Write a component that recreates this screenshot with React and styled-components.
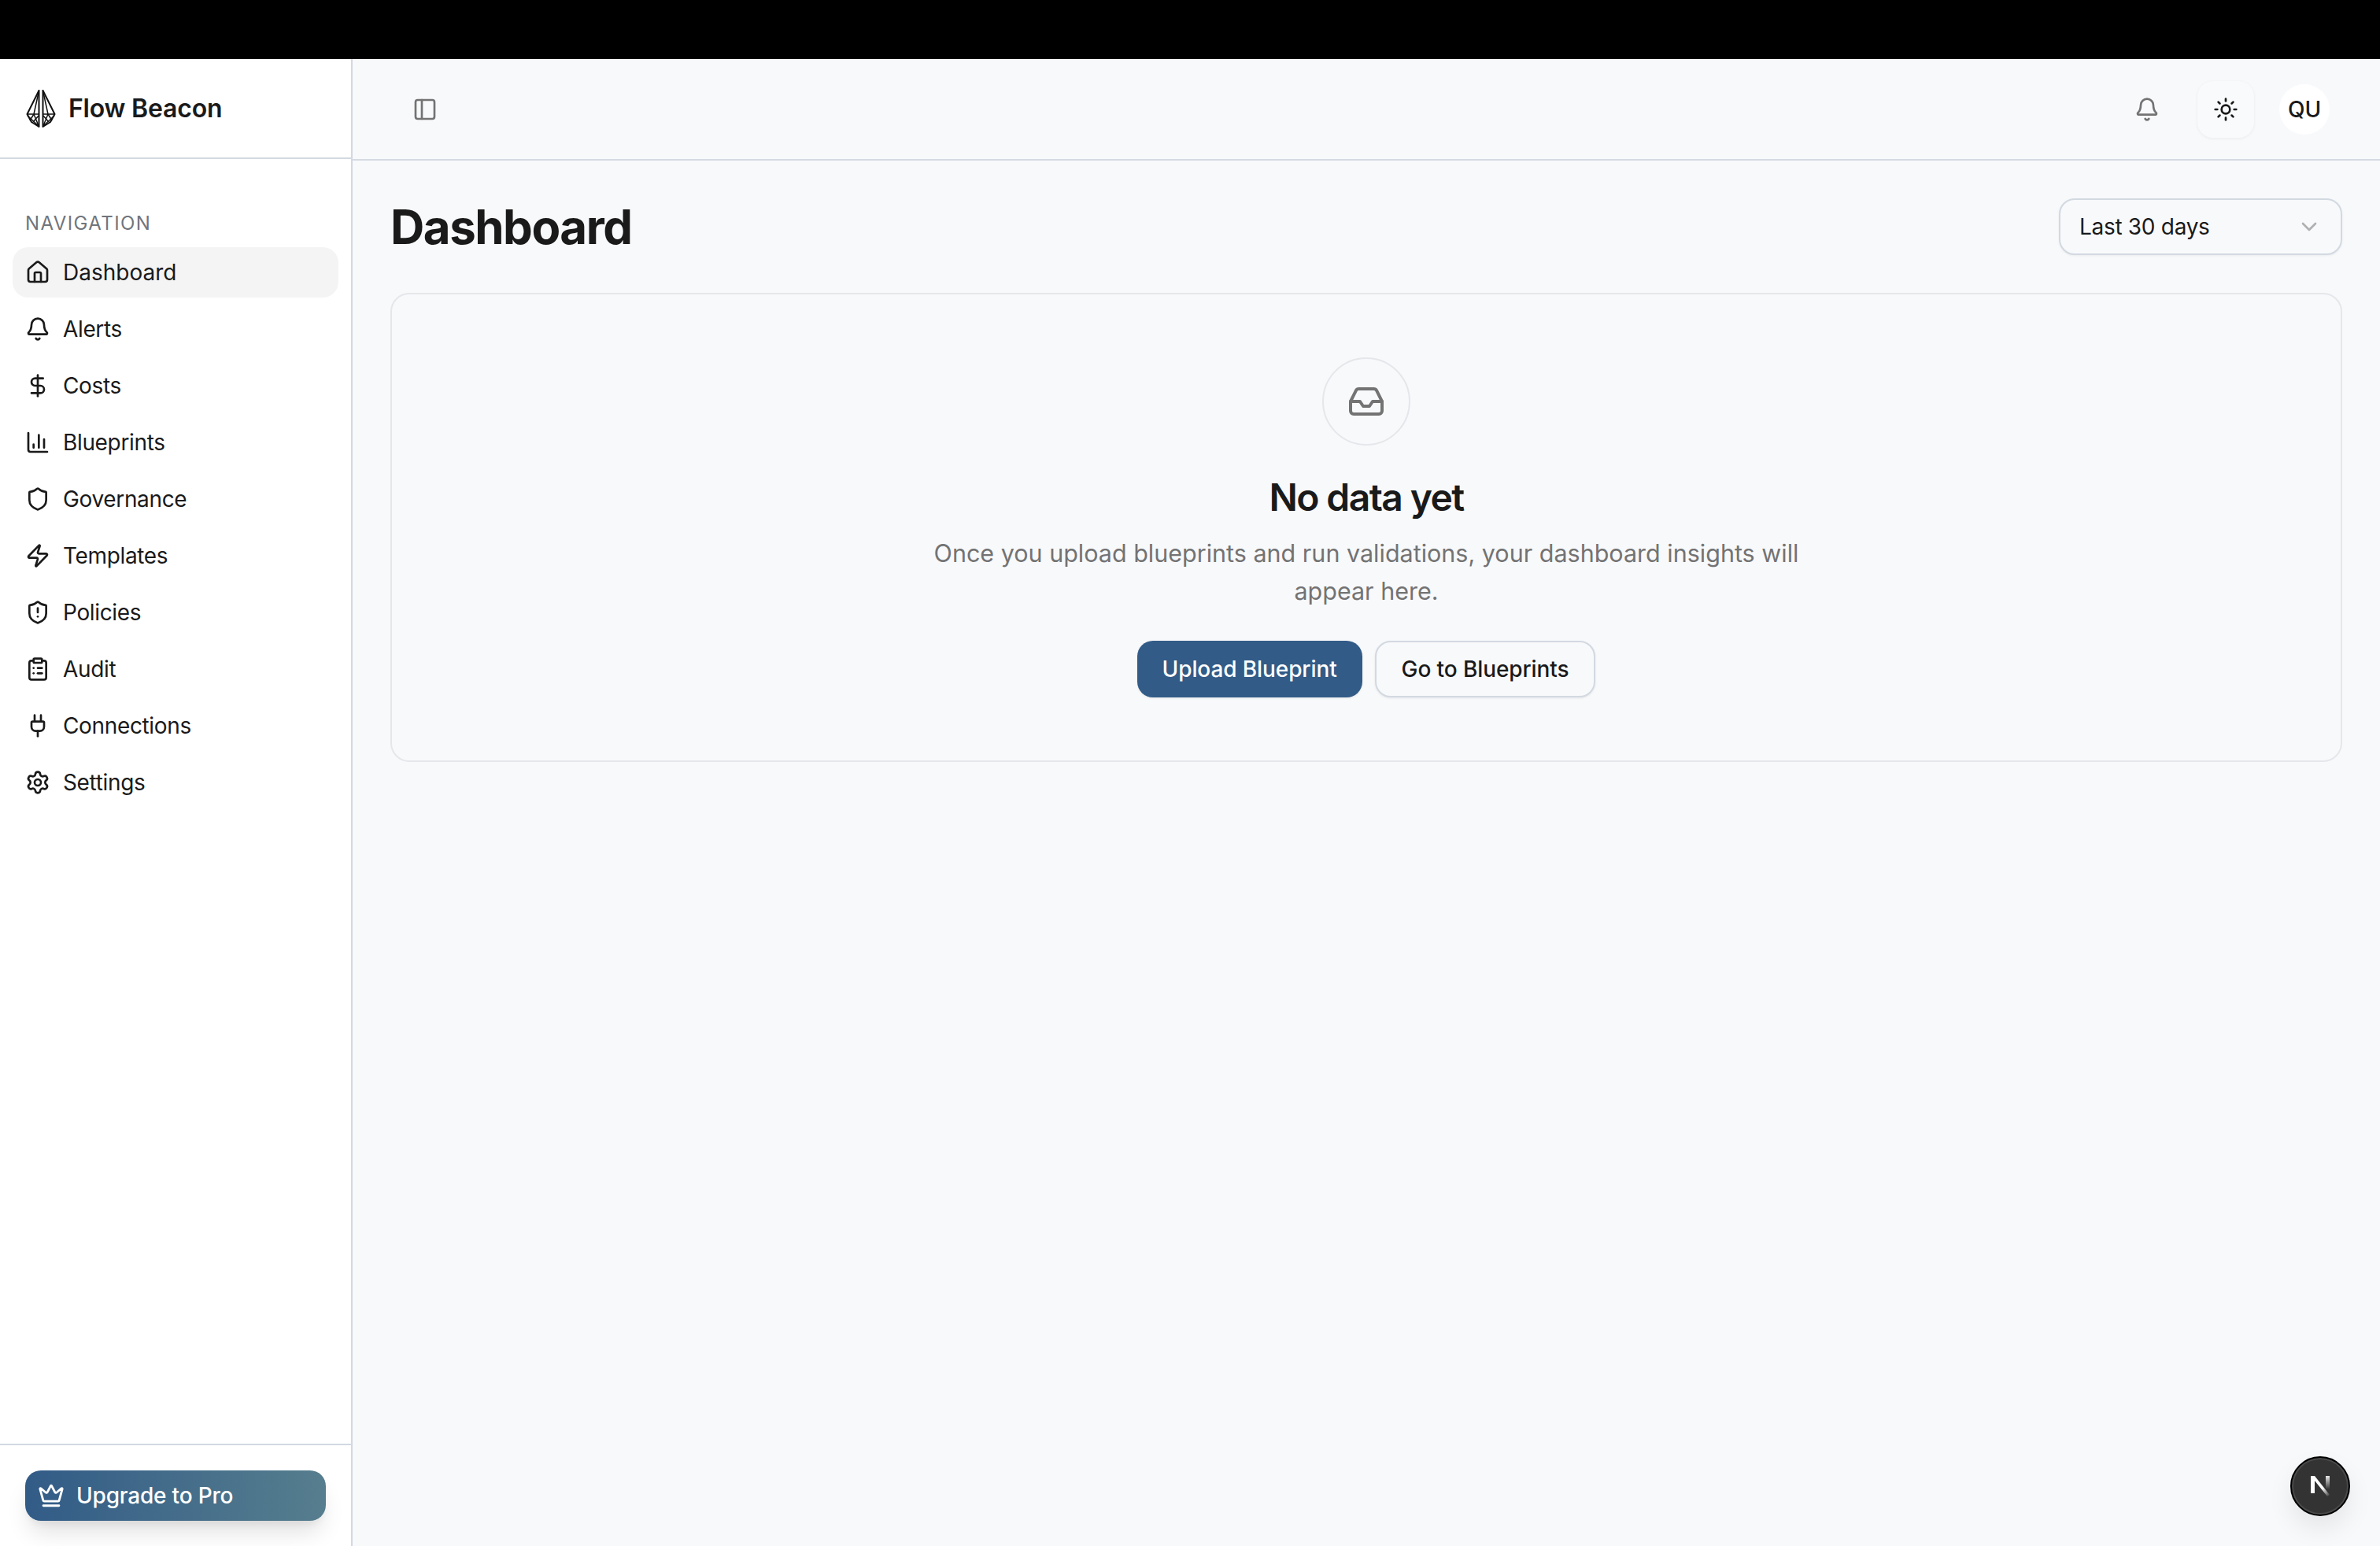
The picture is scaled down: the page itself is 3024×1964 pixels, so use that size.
import React from "react";
import styled, { createGlobalStyle } from "styled-components";
import {
  House, Bell, DollarSign, ChartColumn, Shield, Zap, ShieldAlert, ClipboardList,
  Plug, Settings, PanelLeft, Sun, ChevronDown, Inbox, Crown,
} from "lucide-react";

const Global = createGlobalStyle`
  html, body { margin: 0; padding: 0; background: #000; }
  body { font-family: Inter, "Liberation Sans", sans-serif; color: #1a1a1a; }
  * { box-sizing: border-box; }
`;

const Page = styled.div`
  width: 3024px;
  height: 1964px;
  display: flex;
  flex-direction: column;
  overflow: hidden;
  position: relative;
`;
const TopStrip = styled.div`
  height: 75px;
  flex: none;
  background: #000;
`;
const Shell = styled.div`
  flex: 1;
  display: flex;
  min-height: 0;
`;
const Sidebar = styled.aside`
  width: 448px;
  flex: none;
  display: flex;
  flex-direction: column;
  background: #fff;
  border-right: 2px solid #d3d9e1;
`;
const Brand = styled.div`
  height: 127px;
  flex: none;
  display: flex;
  align-items: center;
  gap: 16px;
  padding: 0 32px 0 33px;
  border-bottom: 2px solid #d3d9e1;
`;
const BrandName = styled.span`
  font-size: 32px;
  font-weight: 600;
  letter-spacing: -0.2px;
  color: #1a1a1a;
  line-height: 44px;
`;
const Nav = styled.nav`
  flex: 1;
  padding: 66px 16px 0;
  display: flex;
  flex-direction: column;
`;
const NavLabel = styled.div`
  font-size: 24px;
  line-height: 32px;
  height: 32px;
  font-weight: 400;
  letter-spacing: 1.4px;
  color: #71757c;
  padding-left: 16px;
  margin-bottom: 14px;
`;
const NavList = styled.div`
  display: flex;
  flex-direction: column;
  gap: 8px;
`;
const NavItem = styled.a`
  height: 64px;
  display: flex;
  align-items: center;
  gap: 16px;
  padding: 0 16px;
  border-radius: 20px;
  font-size: 28px;
  letter-spacing: ${(p) => (p.$active ? "0" : "-0.35px")};
  color: #1a1a1a;
  background: ${(p) => (p.$active ? "#f4f4f5" : "transparent")};
  svg { flex: none; }
`;
const SideFoot = styled.div`
  height: 130px;
  flex: none;
  padding: 32px 32px 0;
  border-top: 2px solid #d3d9e1;
`;
const UpgradeButton = styled.button`
  width: 382px;
  height: 64px;
  display: flex;
  align-items: center;
  gap: 15px;
  padding: 0 16px;
  border: 0;
  border-radius: 20px;
  color: #fff;
  font: 500 28px Inter, sans-serif;
  letter-spacing: -0.2px;
  background: linear-gradient(90deg, #325b87 0%, #567e8e 100%);
  box-shadow: 0 20px 30px -6px rgba(0, 0, 0, 0.12), 0 8px 12px -6px rgba(0, 0, 0, 0.08);
`;
const Main = styled.main`
  flex: 1;
  min-width: 0;
  display: flex;
  flex-direction: column;
  background: #f8f9fb;
`;
const TopBar = styled.header`
  height: 129px;
  flex: none;
  display: flex;
  align-items: center;
  justify-content: space-between;
  padding: 0 64px 0 56px;
  border-bottom: 2px solid #d5dae2;
`;
const TopActions = styled.div`
  display: flex;
  align-items: center;
  gap: 32px;
`;
const GhostIcon = styled.button`
  width: 72px;
  height: 72px;
  display: flex;
  align-items: center;
  justify-content: center;
  padding: 0;
  border: 0;
  background: transparent;
  color: #737373;
`;
const BellButton = styled(GhostIcon)`
  margin-right: -4px;
`;
const ThemeButton = styled(GhostIcon)`
  border-radius: 20px;
  color: #1a1a1a;
  background: #f9fafb;
  box-shadow: 0 1px 4px rgba(0, 0, 0, 0.06);
`;
const Avatar = styled.div`
  width: 64px;
  height: 64px;
  border-radius: 50%;
  background: #fff;
  display: flex;
  align-items: center;
  justify-content: center;
  font-size: 28px;
  font-weight: 500;
  color: #1a1a1a;
`;
const Content = styled.div`
  padding: 48px 48px 0 48px;
  display: flex;
  flex-direction: column;
  gap: 48px;
`;
const TitleRow = styled.div`
  display: flex;
  align-items: center;
  justify-content: space-between;
`;
const Title = styled.h1`
  margin: 0;
  font-size: 60px;
  line-height: 72px;
  font-weight: 700;
  letter-spacing: -1.5px;
  color: #1a1a1a;
`;
const RangeSelect = styled.button`
  width: 360px;
  height: 72px;
  display: flex;
  align-items: center;
  justify-content: space-between;
  padding: 0 24px;
  border: 2px solid #d3d9e1;
  border-radius: 20px;
  background: #f8f9fb;
  font: 400 28px Inter, sans-serif;
  letter-spacing: -0.3px;
  color: #1a1a1a;
  box-shadow: 0 1px 3px rgba(0, 0, 0, 0.06);
  svg { color: #b0b0b0; }
`;
const EmptyCard = styled.section`
  height: 596px;
  border: 2px solid #e5e7eb;
  border-radius: 24px;
  padding: 80px 32px 0;
  display: flex;
  flex-direction: column;
  align-items: center;
`;
const IconCircle = styled.div`
  width: 112px;
  height: 112px;
  border-radius: 50%;
  border: 2px solid #e5e7eb;
  color: #737373;
  display: flex;
  align-items: center;
  justify-content: center;
`;
const EmptyTitle = styled.h2`
  margin: 34px 0 0;
  font-size: 48px;
  line-height: 64px;
  font-weight: 600;
  letter-spacing: -1.6px;
  color: #1a1a1a;
`;
const EmptyText = styled.p`
  margin: 15px 0 0;
  max-width: 1152px;
  font-size: 30.5px;
  line-height: 48px;
  text-align: center;
  color: #737373;
`;
const ButtonRow = styled.div`
  margin-top: 39px;
  display: flex;
  gap: 16px;
`;
const PrimaryButton = styled.button`
  height: 72px;
  padding: 0 32px;
  border: 0;
  border-radius: 20px;
  background: #325b87;
  color: #fff;
  font: 500 28px Inter, sans-serif;
  letter-spacing: -0.1px;
  box-shadow: 0 1px 3px rgba(0, 0, 0, 0.08);
`;
const SecondaryButton = styled(PrimaryButton)`
  border: 2px solid #d3d9e1;
  background: #f8f9fb;
  color: #1a1a1a;
`;
const DevBadge = styled.div`
  position: absolute;
  right: 38px;
  bottom: 38px;
  width: 76px;
  height: 76px;
  border-radius: 50%;
  background: #333;
  border: 2px solid #000;
  box-shadow: inset 0 0 0 2px #4a4a4a, 0 16px 32px rgba(0, 0, 0, 0.08);
  display: flex;
  align-items: center;
  justify-content: center;
`;

const LogoMark = () => (
  <svg width="38" height="48" viewBox="0 0 38 48" fill="none" stroke="#111" strokeWidth="2" strokeLinejoin="round">
    <path d="M16.5 1 L16.5 47 L7 41 L1.5 31 Z" />
    <path d="M21.5 1 L21.5 47 L31 41 L36.5 31 Z" />
    <path d="M16.5 1 L10 31 L16.5 47 M1.5 31 H16.5 M2 33 L16 46 M10 31 L5 39 M16 33 L9 41" strokeWidth="1.5" />
    <path d="M21.5 1 L28 31 L21.5 47 M36.5 31 H21.5 M36 33 L22 46 M28 31 L33 39 M22 33 L29 41" strokeWidth="1.5" />
  </svg>
);

const NextLogo = () => (
  <svg width="26" height="28" viewBox="0 0 26 28" fill="none">
    <defs>
      <linearGradient id="nextDiag" x1="2" y1="1" x2="25" y2="27" gradientUnits="userSpaceOnUse">
        <stop offset="0.6" stopColor="#fff" />
        <stop offset="1" stopColor="#fff" stopOpacity="0" />
      </linearGradient>
      <linearGradient id="nextBar" x1="0" y1="1" x2="0" y2="18" gradientUnits="userSpaceOnUse">
        <stop offset="0" stopColor="#fff" stopOpacity="0.9" />
        <stop offset="1" stopColor="#fff" stopOpacity="0" />
      </linearGradient>
    </defs>
    <path d="M1 1 H6 L25 25 L22 27 L6 7 V23 H1 Z" fill="url(#nextDiag)" />
    <rect x="20" y="1" width="5" height="18" fill="url(#nextBar)" />
  </svg>
);

const navItems = [
  ["Dashboard", House],
  ["Alerts", Bell],
  ["Costs", DollarSign],
  ["Blueprints", ChartColumn],
  ["Governance", Shield],
  ["Templates", Zap],
  ["Policies", ShieldAlert],
  ["Audit", ClipboardList],
  ["Connections", Plug],
  ["Settings", Settings],
];

export default function App() {
  return (
    <Page>
      <Global />
      <TopStrip />
      <Shell>
        <Sidebar>
          <Brand>
            <LogoMark />
            <BrandName>Flow Beacon</BrandName>
          </Brand>
          <Nav>
            <NavLabel>NAVIGATION</NavLabel>
            <NavList>
              {navItems.map(([label, Icon], i) => (
                <NavItem key={label} $active={i === 0}>
                  <Icon size={32} strokeWidth={2} />
                  {label}
                </NavItem>
              ))}
            </NavList>
          </Nav>
          <SideFoot>
            <UpgradeButton>
              <Crown size={34} strokeWidth={2} />
              Upgrade to Pro
            </UpgradeButton>
          </SideFoot>
        </Sidebar>
        <Main>
          <TopBar>
            <GhostIcon as="div">
              <PanelLeft size={32} strokeWidth={2} />
            </GhostIcon>
            <TopActions>
              <BellButton>
                <Bell size={32} strokeWidth={2} />
              </BellButton>
              <ThemeButton>
                <Sun size={32} strokeWidth={2} />
              </ThemeButton>
              <Avatar>QU</Avatar>
            </TopActions>
          </TopBar>
          <Content>
            <TitleRow>
              <Title>Dashboard</Title>
              <RangeSelect>
                Last 30 days
                <ChevronDown size={32} strokeWidth={2} />
              </RangeSelect>
            </TitleRow>
            <EmptyCard>
              <IconCircle>
                <Inbox size={48} strokeWidth={2} />
              </IconCircle>
              <EmptyTitle>No data yet</EmptyTitle>
              <EmptyText>
                Once you upload blueprints and run validations, your dashboard insights will appear here.
              </EmptyText>
              <ButtonRow>
                <PrimaryButton>Upload Blueprint</PrimaryButton>
                <SecondaryButton>Go to Blueprints</SecondaryButton>
              </ButtonRow>
            </EmptyCard>
          </Content>
        </Main>
      </Shell>
      <DevBadge>
        <NextLogo />
      </DevBadge>
    </Page>
  );
}
